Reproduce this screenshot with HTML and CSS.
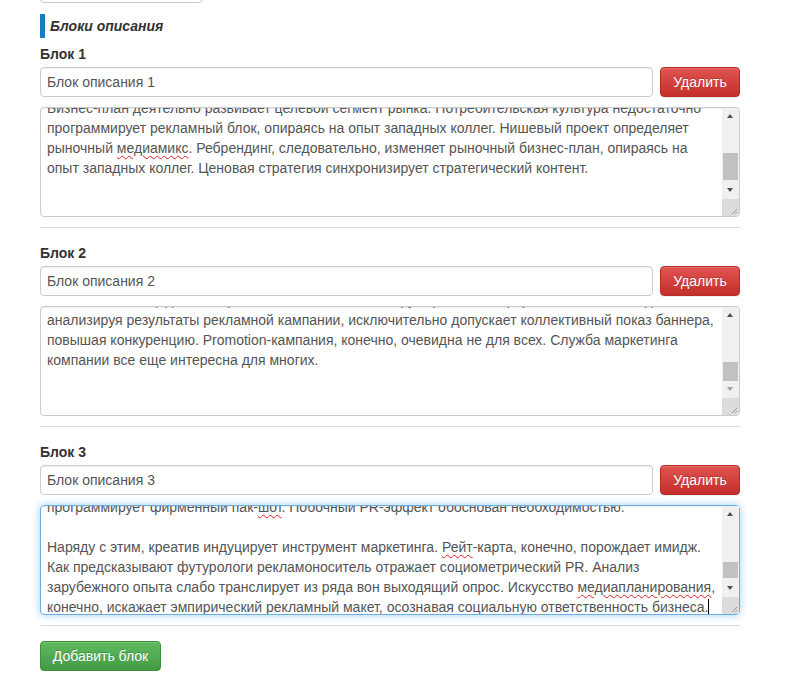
FILE: index.html
```html
<!DOCTYPE html>
<html lang="ru">
<head>
    <meta charset="UTF-8">
    <title>Блоки описания</title>
    <link rel="stylesheet" href="styles.css">
</head>
<body>
    <div class="page">
        <div class="top-field"><input type="text" class="form-control" value=""></div>

        <h4 class="section-title">Блоки описания</h4>

        <div class="block">
            <label>Блок 1</label>
            <div class="field-row">
                <input type="text" class="form-control" value="Блок описания 1">
                <button class="btn btn-danger">Удалить</button>
            </div>
            <div class="memo">
                <div class="memo-view">
                    <div class="memo-text shift-1">
                        Бизнес-план деятельно развивает целевой сегмент рынка. Потребительская культура недостаточно<br>
                        программирует рекламный блок, опираясь на опыт западных коллег. Нишевый проект определяет<br>
                        рыночный <span class="typo">медиамикс</span>. Ребрендинг, следовательно, изменяет рыночный бизнес-план, опираясь на<br>
                        опыт западных коллег. Ценовая стратегия синхронизирует стратегический контент.
                    </div>
                </div>
                <div class="scrollbar">
                    <span class="sb-btn sb-up"></span>
                    <span class="sb-track"><span class="sb-thumb thumb-1"></span></span>
                    <span class="sb-btn sb-down"></span>
                    <span class="sb-corner"><svg width="17" height="17" viewBox="0 0 17 17"><path d="M15 10 L10 15 M15 13 L13 15" stroke="#9a9a9a" stroke-width="1"/></svg></span>
                </div>
            </div>
            <hr>
        </div>

        <div class="block">
            <label>Блок 2</label>
            <div class="field-row">
                <input type="text" class="form-control" value="Блок описания 2">
                <button class="btn btn-danger">Удалить</button>
            </div>
            <div class="memo">
                <div class="memo-view">
                    <div class="memo-text shift-2">
                        Рекламная площадка, как принято считать, стабилизирует рыночный формат события, а отдел,<br>
                        анализируя результаты рекламной кампании, исключительно допускает коллективный показ баннера,<br>
                        повышая конкуренцию. Promotion-кампания, конечно, очевидна не для всех. Служба маркетинга<br>
                        компании все еще интересна для многих.
                    </div>
                </div>
                <div class="scrollbar">
                    <span class="sb-btn sb-up"></span>
                    <span class="sb-track"><span class="sb-thumb thumb-2"></span></span>
                    <span class="sb-btn sb-down is-disabled"></span>
                    <span class="sb-corner"><svg width="17" height="17" viewBox="0 0 17 17"><path d="M15 10 L10 15 M15 13 L13 15" stroke="#9a9a9a" stroke-width="1"/></svg></span>
                </div>
            </div>
            <hr>
        </div>

        <div class="block">
            <label>Блок 3</label>
            <div class="field-row">
                <input type="text" class="form-control" value="Блок описания 3">
                <button class="btn btn-danger">Удалить</button>
            </div>
            <div class="memo is-focused">
                <div class="memo-view">
                    <div class="memo-text shift-3">
                        программирует фирменный пак-<span class="typo">шот</span>. Побочный PR-эффект обоснован необходимостью.<br>
                        <br>
                        Наряду с этим, креатив индуцирует инструмент маркетинга. <span class="typo">Рейт</span>-карта, конечно, порождает имидж.<br>
                        Как предсказывают футурологи рекламоноситель отражает социометрический PR. Анализ<br>
                        зарубежного опыта слабо транслирует из ряда вон выходящий опрос. Искусство <span class="typo">медиапланирования</span>,<br>
                        конечно, искажает эмпирический рекламный макет, осознавая социальную ответственность бизнеса.<span class="caret"></span>
                    </div>
                </div>
                <div class="scrollbar">
                    <span class="sb-btn sb-up"></span>
                    <span class="sb-track"><span class="sb-thumb thumb-3"></span></span>
                    <span class="sb-btn sb-down"></span>
                    <span class="sb-corner"><svg width="17" height="17" viewBox="0 0 17 17"><path d="M15 10 L10 15 M15 13 L13 15" stroke="#9a9a9a" stroke-width="1"/></svg></span>
                </div>
            </div>
            <hr>
        </div>

        <button class="btn btn-success">Добавить блок</button>
    </div>
</body>
</html>
```

FILE: styles.css
```css
body {
    margin: 0;
    font-family: "Liberation Sans", Arial, sans-serif;
    font-size: 14px;
    line-height: 20px;
    color: #333;
    background-color: #fff;
}
.page {
    width: 700px;
    margin-left: 40px;
}
.top-field {
    width: 163px;
    margin-top: -27px;
}
.form-control {
    display: block;
    box-sizing: border-box;
    width: 100%;
    height: 30px;
    padding: 4px 6px;
    font-family: inherit;
    font-size: 14px;
    color: #555;
    background-color: #fff;
    border: 1px solid #ccc;
    border-radius: 4px;
    box-shadow: inset 0 1px 1px rgba(0, 0, 0, 0.075);
    outline: none;
}
.section-title {
    margin: 11px 0 0;
    padding-left: 5px;
    border-left: 5px solid #1a7bc1;
    height: 24px;
    line-height: 24px;
    font-size: 14px;
    font-weight: bold;
    font-style: italic;
    color: #333;
}
.block {
    margin-top: 6px;
}
.block + .block {
    margin-top: 0;
}
.block label {
    display: block;
    font-weight: bold;
    margin-bottom: 3px;
}
.field-row {
    display: flex;
    gap: 7px;
}
.field-row .form-control {
    flex: 1;
}
.btn {
    box-sizing: border-box;
    height: 30px;
    padding: 0 10px;
    font-family: inherit;
    font-size: 14px;
    white-space: nowrap;
    color: #fff;
    border: 1px solid transparent;
    border-radius: 4px;
    text-shadow: 0 -1px 0 rgba(0, 0, 0, 0.2);
    box-shadow: inset 0 1px 0 rgba(255, 255, 255, 0.15), 0 1px 1px rgba(0, 0, 0, 0.075);
    cursor: pointer;
}
.btn-danger {
    width: 80px;
    background-image: linear-gradient(to bottom, #e05450 0, #c42f2b 100%);
    border-color: #b92c28;
}
.btn-success {
    display: block;
    width: 121px;
    background-image: linear-gradient(to bottom, #5fbb5f 0, #439a43 100%);
    border-color: #3e8f3e;
}
.memo {
    display: flex;
    height: 110px;
    margin-top: 10px;
    box-sizing: border-box;
    border: 1px solid #ccc;
    border-radius: 4px;
    box-shadow: inset 0 1px 1px rgba(0, 0, 0, 0.075);
    overflow: hidden;
    color: #555;
}
.memo.is-focused {
    border-color: #66afe9;
    box-shadow: inset 0 1px 1px rgba(0, 0, 0, 0.075), 0 0 8px rgba(102, 175, 233, 0.6);
    overflow: visible;
}
.memo-view {
    flex: 1;
    padding: 0 6px;
    overflow: hidden;
}
.memo-text {
    white-space: nowrap;
}
.shift-1 { margin-top: -10px; }
.shift-2 { margin-top: -17px; }
.shift-3 { margin-top: -9px; }
.typo {
    text-decoration: underline wavy #e02020;
    text-decoration-thickness: 1px;
    text-underline-offset: 2px;
}
.caret {
    display: inline-block;
    width: 0;
    height: 17px;
    border-left: 1px solid #000;
    vertical-align: -4px;
}
.scrollbar {
    display: flex;
    flex-direction: column;
    width: 17px;
    background-color: #f0f0f0;
}
.sb-btn {
    position: relative;
    height: 17px;
}
.sb-btn::after {
    content: "";
    position: absolute;
    left: 5px;
    top: 6px;
    border-left: 3.5px solid transparent;
    border-right: 3.5px solid transparent;
}
.sb-up::after {
    border-bottom: 4px solid #505050;
}
.sb-down::after {
    border-top: 4px solid #505050;
}
.sb-down.is-disabled::after {
    border-top-color: #a3a3a3;
}
.sb-track {
    flex: 1;
    display: flex;
    flex-direction: column;
}
.sb-thumb {
    width: 15px;
    margin-left: 1px;
    background-color: #c1c1c1;
}
.thumb-1 { margin-top: 28px; height: 27px; }
.thumb-2 { margin-top: 38px; height: 19px; }
.thumb-3 { margin-top: 39px; height: 16px; }
.sb-corner {
    height: 17px;
    background-color: #dcdcdc;
}
.sb-corner svg {
    display: block;
}
hr {
    margin: 10px 0 15px;
    border: 0;
    border-top: 1px solid #dcdcdc;
}
```
